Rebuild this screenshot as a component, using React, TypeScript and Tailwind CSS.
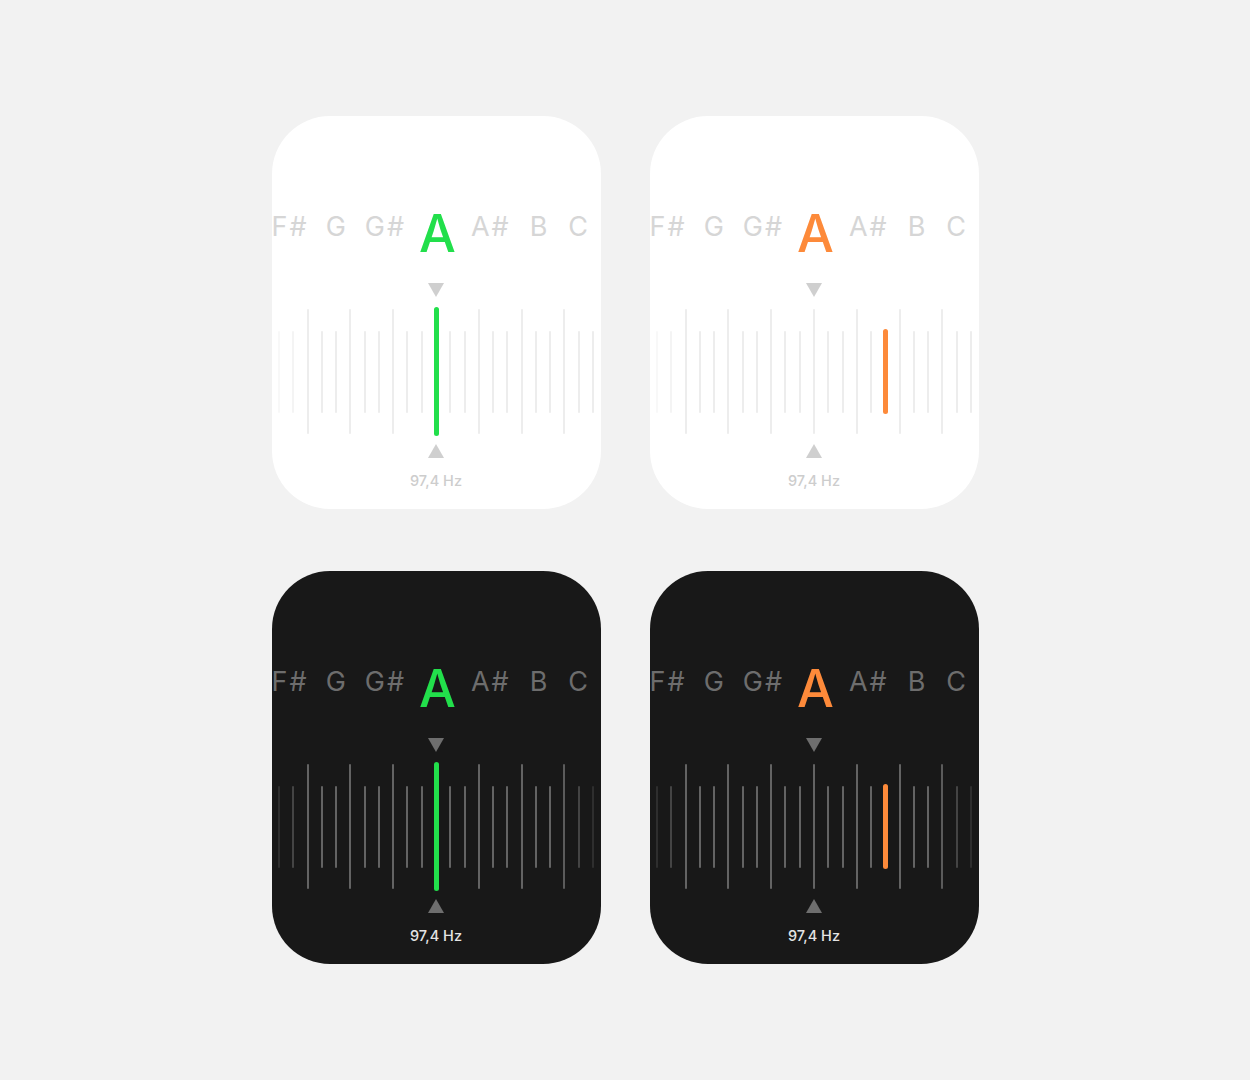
const LEFT_NOTES = ['F#', 'G', 'G#'];
const RIGHT_NOTES = ['A#', 'B', 'C'];
const TICK_COUNT = 23;
const CENTER = 11;

const lightFade = ['opacity-40', 'opacity-60'];
const darkFade: Record<number, string> = {
  0: 'opacity-30',
  1: 'opacity-60',
  20: 'opacity-90',
  21: 'opacity-60',
  22: 'opacity-30',
};

type Variant = 'light' | 'dark';
type Tone = 'green' | 'orange';

function Note({ name }: { name: string }) {
  const sharp = name.endsWith('#');
  return (
    <span className="flex shrink-0">
      <span>{name[0]}</span>
      {sharp && <span className="ml-[2px]">#</span>}
    </span>
  );
}

function Triangle({ down, dark }: { down?: boolean; dark: boolean }) {
  return (
    <svg width="16" height="14" viewBox="0 0 16 14" className="block">
      <path
        d={down ? 'M0 0 L16 0 L8 14 Z' : 'M8 0 L16 14 L0 14 Z'}
        fill={dark ? '#6e6e6e' : '#cfcfcf'}
      />
    </svg>
  );
}

function Ticks({ variant, tone }: { variant: Variant; tone: Tone }) {
  const dark = variant === 'dark';
  return (
    <div className="flex items-center gap-[12.27px] h-[129px] mt-[10px]">
      {Array.from({ length: TICK_COUNT }).map((_, i) => {
        const long = (i - CENTER) % 3 === 0;
        if (tone === 'green' && i === CENTER) {
          return <div key={i} className="w-[5px] -mx-[1.5px] h-[129px] rounded-full bg-[#22df4b]" />;
        }
        if (tone === 'orange' && i === 16) {
          return <div key={i} className="w-[5px] -mx-[1.5px] h-[85px] rounded-full bg-[#fd8a3a]" />;
        }
        const fade = dark ? darkFade[i] ?? '' : lightFade[i] ?? '';
        return (
          <div
            key={i}
            className={`w-[2px] rounded-full ${long ? 'h-[125px]' : 'h-[82px]'} ${
              dark ? 'bg-[#636363]' : 'bg-[#ededed]'
            } ${fade}`}
          />
        );
      })}
    </div>
  );
}

function TunerCard({ variant, tone }: { variant: Variant; tone: Tone }) {
  const dark = variant === 'dark';
  const noteColor = dark ? 'text-[#6d6d6d]' : 'text-[#d6d6d6]';
  return (
    <div
      className={`w-[329px] h-[393px] rounded-[58px] overflow-hidden flex flex-col items-center pt-[92px] ${
        dark ? 'bg-[#181818]' : 'bg-white'
      }`}
      style={{ fontFamily: 'Inter, "Noto Sans", sans-serif' }}
    >
      <div className="grid grid-cols-[minmax(0,1fr)_auto_minmax(0,1fr)] items-start gap-x-[15px] w-full translate-x-[1.5px]">
        <div className={`flex justify-end gap-[19px] mt-[5px] text-[27px] leading-none whitespace-nowrap ${noteColor}`}>
          {LEFT_NOTES.map((n) => (
            <Note key={n} name={n} />
          ))}
        </div>
        <span
          className={`text-[52px] leading-none font-medium ${
            tone === 'green' ? 'text-[#22df4b]' : 'text-[#fd8a3a]'
          }`}
        >
          A
        </span>
        <div className={`flex justify-start gap-[21px] mt-[5px] text-[27px] leading-none whitespace-nowrap ${noteColor}`}>
          {RIGHT_NOTES.map((n) => (
            <Note key={n} name={n} />
          ))}
        </div>
      </div>

      <div className="mt-[23px]">
        <Triangle down dark={dark} />
      </div>

      <Ticks variant={variant} tone={tone} />

      <div className="mt-[8px]">
        <Triangle dark={dark} />
      </div>

      <div
        className={`mt-[16px] text-[14.5px] leading-none font-medium ${
          dark ? 'text-[#e4e4e4]' : 'text-[#cdcdcd]'
        }`}
      >
        97,4 Hz
      </div>
    </div>
  );
}

export default function App() {
  return (
    <div className="min-h-screen h-[1080px] w-full bg-[#f2f2f2] flex items-center justify-center">
      <div className="grid grid-cols-[329px_329px] gap-x-[49px] gap-y-[62px]">
        <TunerCard variant="light" tone="green" />
        <TunerCard variant="light" tone="orange" />
        <TunerCard variant="dark" tone="green" />
        <TunerCard variant="dark" tone="orange" />
      </div>
    </div>
  );
}
